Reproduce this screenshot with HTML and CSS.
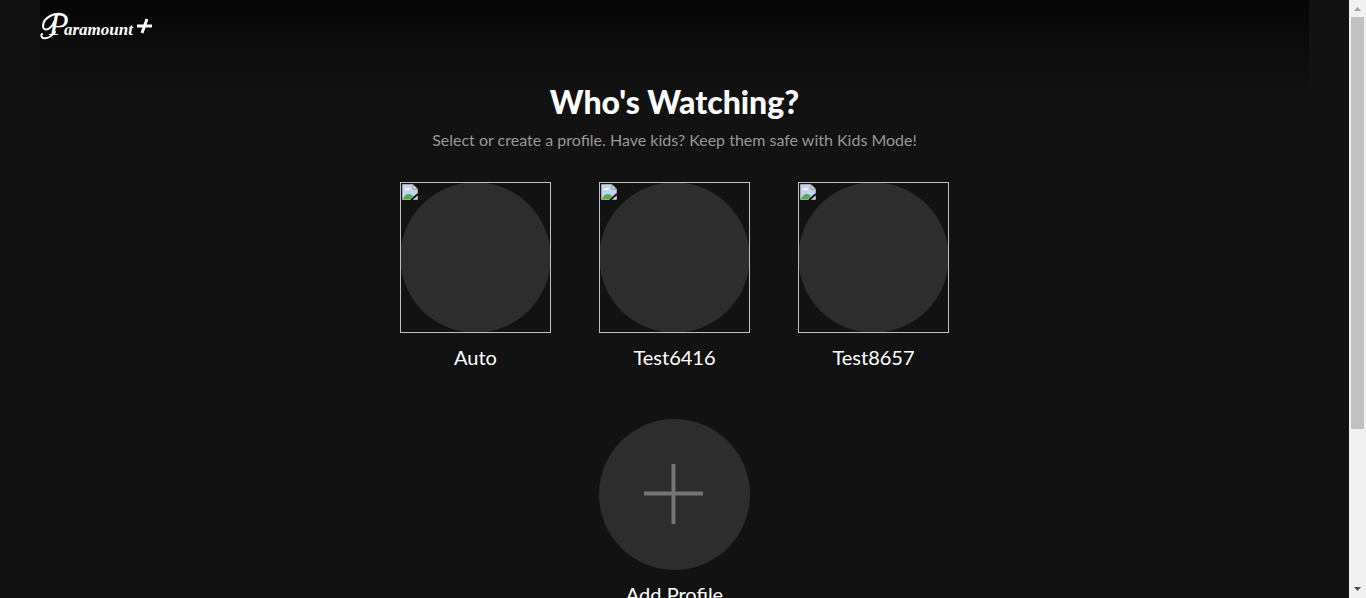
FILE: index.html
```html
<!DOCTYPE html>
<html lang="en">
<head>
<meta charset="utf-8">
<meta name="viewport" content="width=device-width, initial-scale=1">
<title>Who's Watching?</title>
<link rel="stylesheet" href="styles.css">
</head>
<body class="app">
<svg class="sprite" aria-hidden="true">
  <symbol id="missing-image" viewBox="0 0 16 16">
    <path fill="#c2d3f5" d="M1 1h10l4 4v10H1z"/>
    <path fill="#fff" d="M3 6c0-2 2-2 2-1 1-2 4-1 3 1zM11 1l4 4h-4z"/>
    <path fill="#52b043" d="M1 15c1-3 3-5 6-5 2 0 3 1 4 2l-3 3z"/>
    <path fill="none" stroke="#a8a8a8" d="M.5 15.500V.5H11L15.500 5v10.500z"/>
    <path fill="none" stroke="#8a8a8a" d="M11 1v4h4"/>
    <path stroke="#121212" stroke-width="2" d="M9 16l7-6"/>
  </symbol>
</svg>
<div class="page">
  <header class="header">
    <a class="logo" href="#" aria-label="Paramount+">
      <svg width="114" height="32" viewBox="0 0 114 32" aria-hidden="true">
        <path class="logo-swash" d="M24 5C15 1 3 8 3 16c0 6 8 4 11-4M15 22C11 27 7 29 3 28c-2-1-2-3-1-4"/>
        <text class="logo-text" x="9" y="25"><tspan class="logo-initial">P</tspan><tspan x="24">aramount</tspan></text>
        <path class="logo-plus" d="M97 16h15M107 9l-5 14"/>
      </svg>
    </a>
  </header>
  <main class="profiles">
    <h1 class="title">Who's Watching?</h1>
    <p class="subtitle">Select or create a profile. Have kids? Keep them safe with Kids Mode!</p>
    <ul class="list">
      <li><a class="profile" href="#"><span class="avatar avatar-missing"><svg class="missing"><use href="#missing-image"/></svg></span><span class="name">Auto</span></a></li>
      <li><a class="profile" href="#"><span class="avatar avatar-missing"><svg class="missing"><use href="#missing-image"/></svg></span><span class="name">Test6416</span></a></li>
      <li><a class="profile" href="#"><span class="avatar avatar-missing"><svg class="missing"><use href="#missing-image"/></svg></span><span class="name">Test8657</span></a></li>
      <li><a class="profile" href="#"><span class="avatar avatar-add"><svg width="61" height="61" viewBox="0 0 61 61" aria-hidden="true"><path stroke="#757575" stroke-width="4" d="M0 29.500h59M29.500 0v60"/></svg></span><span class="name">Add Profile</span></a></li>
    </ul>
  </main>
</div>
<div class="scrollbar" aria-hidden="true">
  <svg class="arrow" viewBox="0 0 17 17"><path fill="#a3a3a3" d="M5 11l3.500-4 3.500 4z"/></svg>
  <div class="track"><div class="thumb"></div></div>
  <svg class="arrow" viewBox="0 0 17 17"><path fill="#505050" d="M5 6l3.500 4L12 6z"/></svg>
</div>
</body>
</html>
```
FILE: styles.css
```css
* { box-sizing: border-box; }

.app {
  display: flex;
  height: 100vh;
  margin: 0;
  overflow: hidden;
  background: #121212;
  color: #fff;
  font-family: Lato, "Open Sans", sans-serif;
}

.sprite { display: none; }

.page {
  flex: 1;
  min-width: 0;
  overflow: hidden;
  padding: 0 40px;
  background: linear-gradient(#060606, #121212) no-repeat content-box;
  background-origin: content-box;
  background-size: 100% 100px;
}

.header {
  height: 83px;
  padding-top: 10px;
}

.logo { display: inline-block; }
.logo svg { display: block; }
.logo-text {
  fill: #fff;
  font-family: "Liberation Serif", serif;
  font-size: 17px;
  font-style: italic;
  font-weight: 700;
}
.logo-initial { font-size: 32px; font-weight: 400; }
.logo-swash { fill: none; stroke: #fff; stroke-width: 2; stroke-linecap: round; }
.logo-plus { stroke: #fff; stroke-width: 3; }

.profiles { text-align: center; }

.title {
  margin: 0;
  font-size: 32px;
  line-height: 38px;
  font-weight: 900;
}

.subtitle {
  margin: 8px 0 31px;
  color: #989898;
  font-size: 16px;
  line-height: 22px;
}

.list {
  display: flex;
  flex-wrap: wrap;
  justify-content: center;
  gap: 50px 48px;
  max-width: 640px;
  margin: 0 auto;
  padding: 0;
  list-style: none;
}

.profile {
  display: block;
  width: 151px;
  color: #fff;
  text-decoration: none;
}

.avatar {
  display: flex;
  height: 151px;
  background: radial-gradient(circle closest-side, #2d2d2d 99%, transparent 100%) border-box;
}
.avatar-missing { padding: 1px; border: 1px solid #c0c0c0; }
.avatar-add {
  align-items: center;
  justify-content: center;
  border-radius: 50%;
  background: #2d2d2d;
}

.missing { width: 16px; height: 16px; }

.name {
  display: block;
  margin-top: 12px;
  font-size: 20px;
  line-height: 24px;
}

.scrollbar {
  display: flex;
  flex-direction: column;
  flex: none;
  width: 17px;
  background: #f1f1f1;
}
.arrow { width: 17px; height: 17px; }
.track { flex: 1; padding: 0 2px; }
.thumb { height: 73%; background: #c1c1c1; }
```
